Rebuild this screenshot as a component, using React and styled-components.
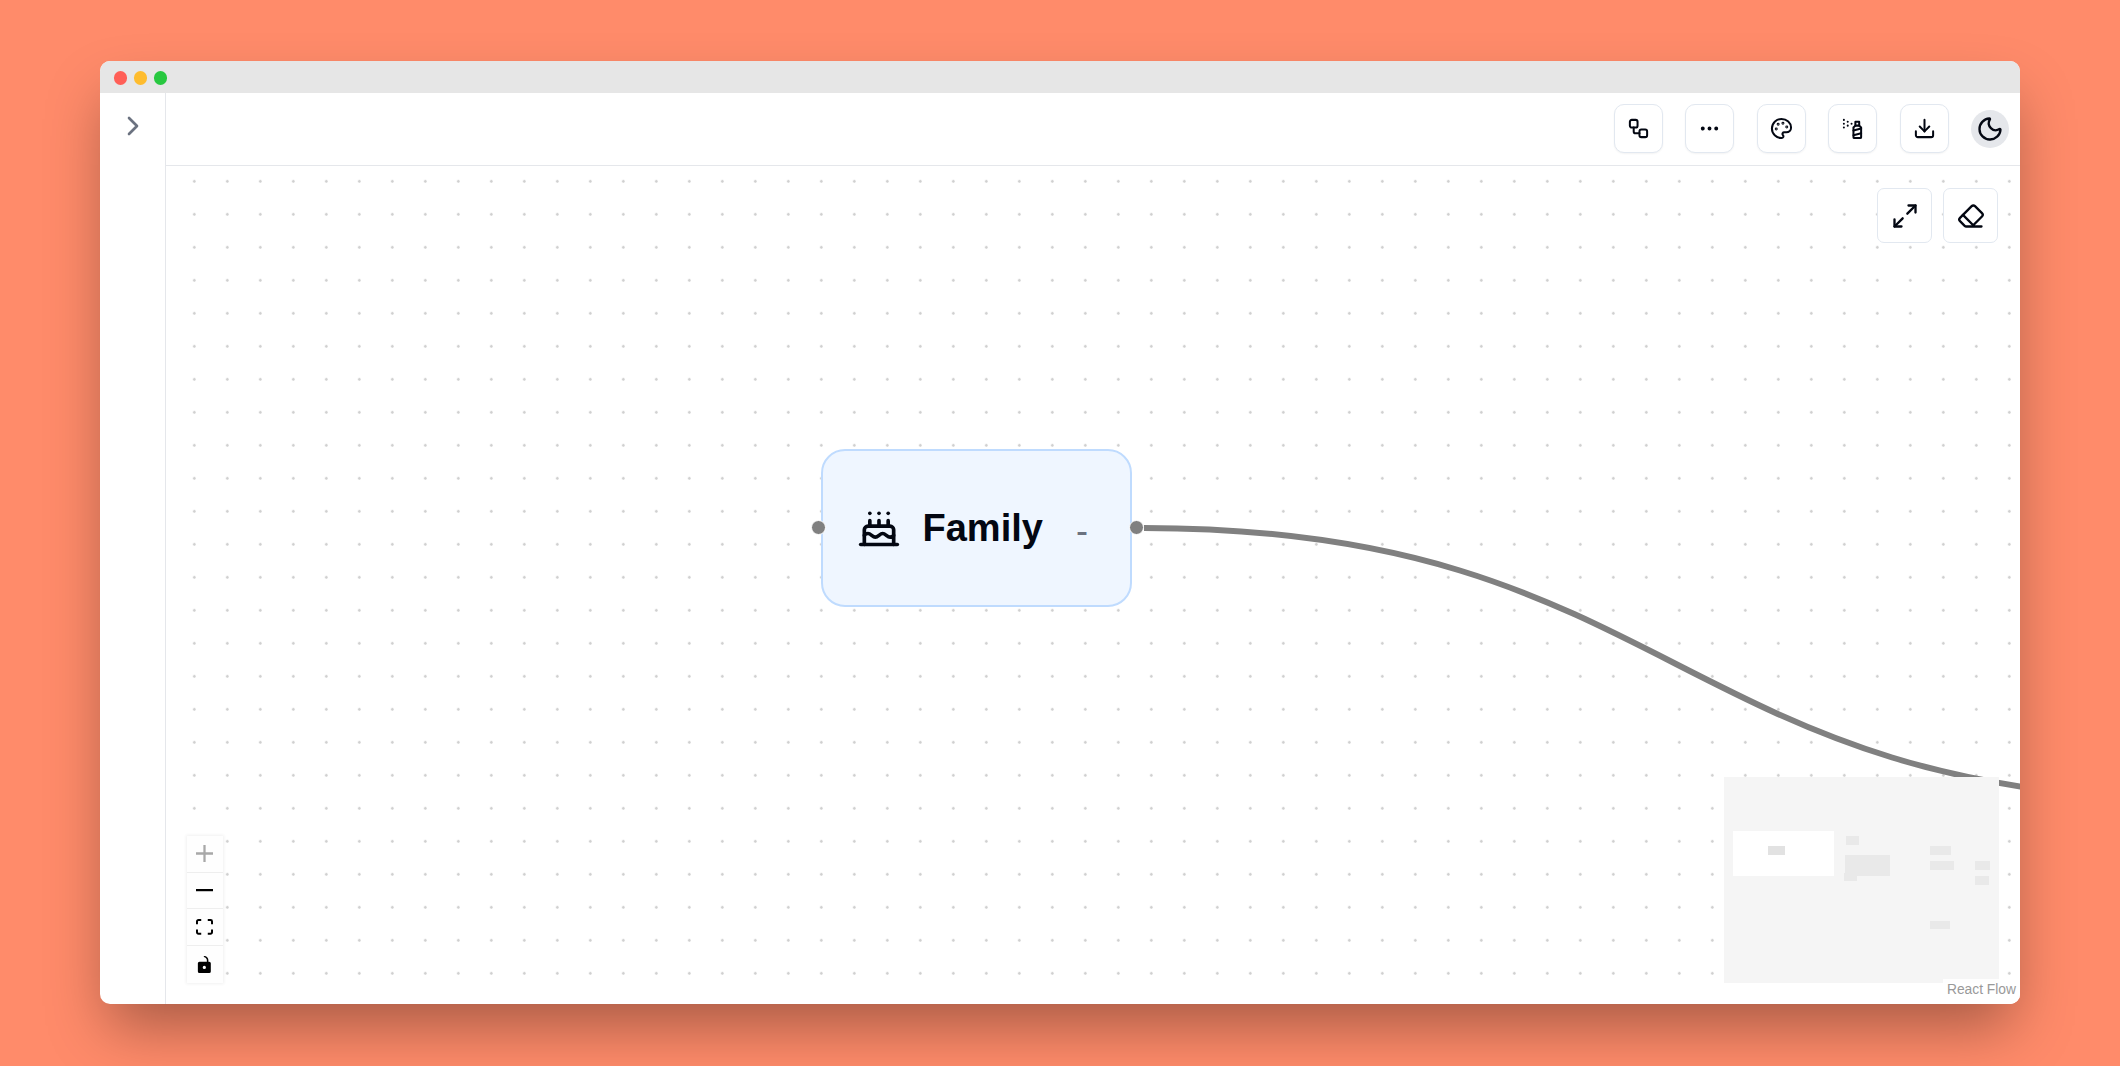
import React from "react";
import styled, { createGlobalStyle } from "styled-components";
import {
  Cake,
  ChevronRight,
  Download,
  Ellipsis,
  Eraser,
  Maximize2,
  Moon,
  Palette,
  SprayCan,
  Workflow,
} from "lucide-react";

const GlobalStyle = createGlobalStyle`
  html, body {
    margin: 0;
    padding: 0;
    background: #ff8b6a;
  }
  * {
    box-sizing: border-box;
  }
`;

const Page = styled.div`
  width: 2120px;
  height: 1066px;
  overflow: hidden;
  padding: 61px 100px 62px;
  background: #ff8b6a;
  font-family: "Liberation Sans", Arial, sans-serif;
`;

const Window = styled.div`
  display: flex;
  flex-direction: column;
  height: 100%;
  overflow: hidden;
  border-radius: 10px;
  background: #fff;
  box-shadow: 0 30px 60px -8px rgba(0, 0, 0, 0.35);
`;

const TitleBar = styled.div`
  display: flex;
  flex: 0 0 32px;
  align-items: center;
  gap: 6.5px;
  padding: 2px 0 0 13.5px;
  background: #e6e6e6;
`;

const Light = styled.span`
  width: 13.5px;
  height: 13.5px;
  border-radius: 50%;
  background: ${(p) => p.$color};
`;

const Body = styled.div`
  display: flex;
  flex: 1;
  min-height: 0;
`;

const Sidebar = styled.div`
  display: flex;
  flex: 0 0 66px;
  justify-content: center;
  padding-top: 17px;
  border-right: 1px solid #e5e7eb;
  color: #6b7280;
`;

const Main = styled.div`
  display: flex;
  flex: 1;
  flex-direction: column;
  min-width: 0;
`;

const Toolbar = styled.div`
  display: flex;
  flex: 0 0 73px;
  align-items: center;
  justify-content: flex-end;
  gap: 22.5px;
  padding: 0 11px 1px 0;
  border-bottom: 1px solid #e5e7eb;
`;

const ToolButton = styled.div`
  display: flex;
  align-items: center;
  justify-content: center;
  width: 49px;
  height: 49px;
  border: 1px solid #e2e8f0;
  border-radius: 10px;
  background: #fff;
  box-shadow: 0 1px 2px rgba(0, 0, 0, 0.05);
  color: #030712;
`;

const ThemeButton = styled.div`
  display: flex;
  align-items: center;
  justify-content: center;
  width: 38px;
  height: 38px;
  border-radius: 50%;
  background: #e5e7eb;
  color: #030712;
`;

const Canvas = styled.div`
  position: relative;
  flex: 1;
  overflow: hidden;
  background-color: #fff;
  background-image: radial-gradient(circle, #cfcfcf 1px, transparent 1.6px);
  background-size: 33px 33px;
  background-position: 11.8px -1.2px;
`;

const EdgeLayer = styled.svg`
  position: absolute;
  inset: 0;
  width: 100%;
  height: 100%;
`;

const CanvasActions = styled.div`
  position: absolute;
  top: 22px;
  right: 22px;
  display: flex;
  gap: 11px;
`;

const CanvasButton = styled.div`
  display: flex;
  align-items: center;
  justify-content: center;
  width: 55px;
  height: 55px;
  border: 1px solid #e2e8f0;
  border-radius: 7px;
  background: #fff;
  color: #030712;
`;

const Node = styled.div`
  position: absolute;
  left: 654.5px;
  top: 283px;
  display: flex;
  align-items: center;
  width: 311.5px;
  height: 158px;
  padding: 0 0 0 34px;
  border: 2px solid #bfdbfe;
  border-radius: 24px;
  background: #eff6ff;
  color: #030712;
`;

const NodeLabel = styled.span`
  margin-left: 22px;
  font-size: 38px;
  font-weight: 700;
  line-height: 1;
`;

const NodeDash = styled.span`
  margin: 5px 0 0 33px;
  color: #6b7280;
  font-size: 36px;
  font-weight: 400;
  line-height: 1;
`;

const Handle = styled.span`
  position: absolute;
  top: 50%;
  ${(p) => (p.$side === "left" ? "left: -11.5px;" : "right: -13.5px;")}
  width: 15px;
  height: 15px;
  margin-top: -8px;
  border: 1px solid #fff;
  border-radius: 50%;
  background: #808080;
`;

const Controls = styled.div`
  position: absolute;
  left: 20.5px;
  bottom: 21.5px;
  width: 36px;
  box-shadow: 0 0 3px 1px rgba(0, 0, 0, 0.06);
`;

const ControlButton = styled.div`
  display: flex;
  align-items: center;
  justify-content: center;
  height: 36.6px;
  border-bottom: 1px solid #eee;
  background: #fefefe;
  color: ${(p) => (p.$disabled ? "#a8a8a8" : "#000")};

  &:last-child {
    border-bottom: 0;
  }

  svg {
    width: 17px;
    max-height: 17px;
    fill: currentColor;
  }
`;

const MiniMap = styled.svg`
  position: absolute;
  right: 21px;
  bottom: 21px;
  display: block;
  width: 275px;
  height: 206px;
`;

const Attribution = styled.div`
  position: absolute;
  right: 0;
  bottom: 0;
  padding: 3px 4px 6px;
  background: rgba(255, 255, 255, 0.85);
  color: #999;
  font-size: 13.8px;
  line-height: 16px;
`;

const lights = ["#ff5f57", "#febc2e", "#28c840"];

const toolIcons = [Workflow, Ellipsis, Palette, SprayCan, Download];

const App = () => {
  return (
    <Page>
      <GlobalStyle />
      <Window>
        <TitleBar>
          {lights.map((color) => (
            <Light key={color} $color={color} />
          ))}
        </TitleBar>
        <Body>
          <Sidebar>
            <ChevronRight size={32} />
          </Sidebar>
          <Main>
            <Toolbar>
              {toolIcons.map((Icon, i) => (
                <ToolButton key={i}>
                  <Icon size={23} strokeWidth={2.1} />
                </ToolButton>
              ))}
              <ThemeButton>
                <Moon size={28} />
              </ThemeButton>
            </Toolbar>
            <Canvas>
              <EdgeLayer>
                <path
                  d="M978 362 C1510 362 1510 634 2042 634"
                  fill="none"
                  stroke="#808080"
                  strokeWidth="6"
                />
              </EdgeLayer>
              <CanvasActions>
                <CanvasButton>
                  <Maximize2 size={28} />
                </CanvasButton>
                <CanvasButton>
                  <Eraser size={28} />
                </CanvasButton>
              </CanvasActions>
              <Node>
                <Handle $side="left" />
                <Cake size={44} />
                <NodeLabel>Family</NodeLabel>
                <NodeDash>-</NodeDash>
                <Handle $side="right" />
              </Node>
              <Controls>
                <ControlButton $disabled>
                  <svg viewBox="0 0 32 32">
                    <path d="M32 18.133H18.133V32h-4.266V18.133H0v-4.266h13.867V0h4.266v13.867H32z" />
                  </svg>
                </ControlButton>
                <ControlButton>
                  <svg viewBox="0 0 32 5">
                    <path d="M0 0h32v4.2H0z" />
                  </svg>
                </ControlButton>
                <ControlButton>
                  <svg viewBox="0 0 32 30">
                    <path d="M3.692 4.63c0-.53.4-.938.939-.938h5.215V0H4.708C2.13 0 0 2.054 0 4.63v5.216h3.692V4.631zM27.354 0h-5.2v3.692h5.17c.53 0 .984.4.984.939v5.215H32V4.631A4.624 4.624 0 0027.354 0zm.954 24.83c0 .532-.4.94-.939.94h-5.215v3.768h5.215c2.577 0 4.631-2.13 4.631-4.707v-5.139h-3.692v5.139zm-23.677.94c-.531 0-.939-.4-.939-.94v-5.138H0v5.139c0 2.577 2.13 4.707 4.708 4.707h5.138V25.77H4.631z" />
                  </svg>
                </ControlButton>
                <ControlButton>
                  <svg viewBox="0 0 25 32">
                    <path d="M21.333 10.667H19.81V7.619C19.81 3.429 16.38 0 12.19 0c-1.828 0-1.37 2.133.305 2.438 1.676.305 4.42 2.59 4.42 5.181v3.048H3.047A3.056 3.056 0 000 13.714v15.238A3.056 3.056 0 003.048 32h18.285a3.056 3.056 0 003.048-3.048V13.714a3.056 3.056 0 00-3.048-3.047zM12.19 24.533a3.056 3.056 0 01-3.047-3.047 3.056 3.056 0 013.047-3.048 3.056 3.056 0 013.048 3.048 3.056 3.056 0 01-3.048 3.047z" />
                  </svg>
                </ControlButton>
              </Controls>
              <MiniMap viewBox="0 0 275 206">
                <rect width="275" height="206" fill="#f5f5f5" />
                <rect x="9" y="54" width="101" height="45" fill="#fff" />
                <rect x="44" y="69" width="17" height="9" fill="#e2e2e2" />
                <rect x="122" y="59" width="13" height="9" fill="#e9e9e9" />
                <rect x="121" y="78" width="45" height="21" fill="#e9e9e9" />
                <rect x="120" y="96" width="13" height="8" fill="#e9e9e9" />
                <rect x="206" y="69" width="21" height="9" fill="#e9e9e9" />
                <rect x="206" y="84" width="24" height="9" fill="#e9e9e9" />
                <rect x="251" y="84" width="15" height="9" fill="#e9e9e9" />
                <rect x="251" y="99" width="14" height="9" fill="#e9e9e9" />
                <rect x="206" y="144" width="20" height="8" fill="#e9e9e9" />
              </MiniMap>
              <Attribution>React Flow</Attribution>
            </Canvas>
          </Main>
        </Body>
      </Window>
    </Page>
  );
};

export default App;
